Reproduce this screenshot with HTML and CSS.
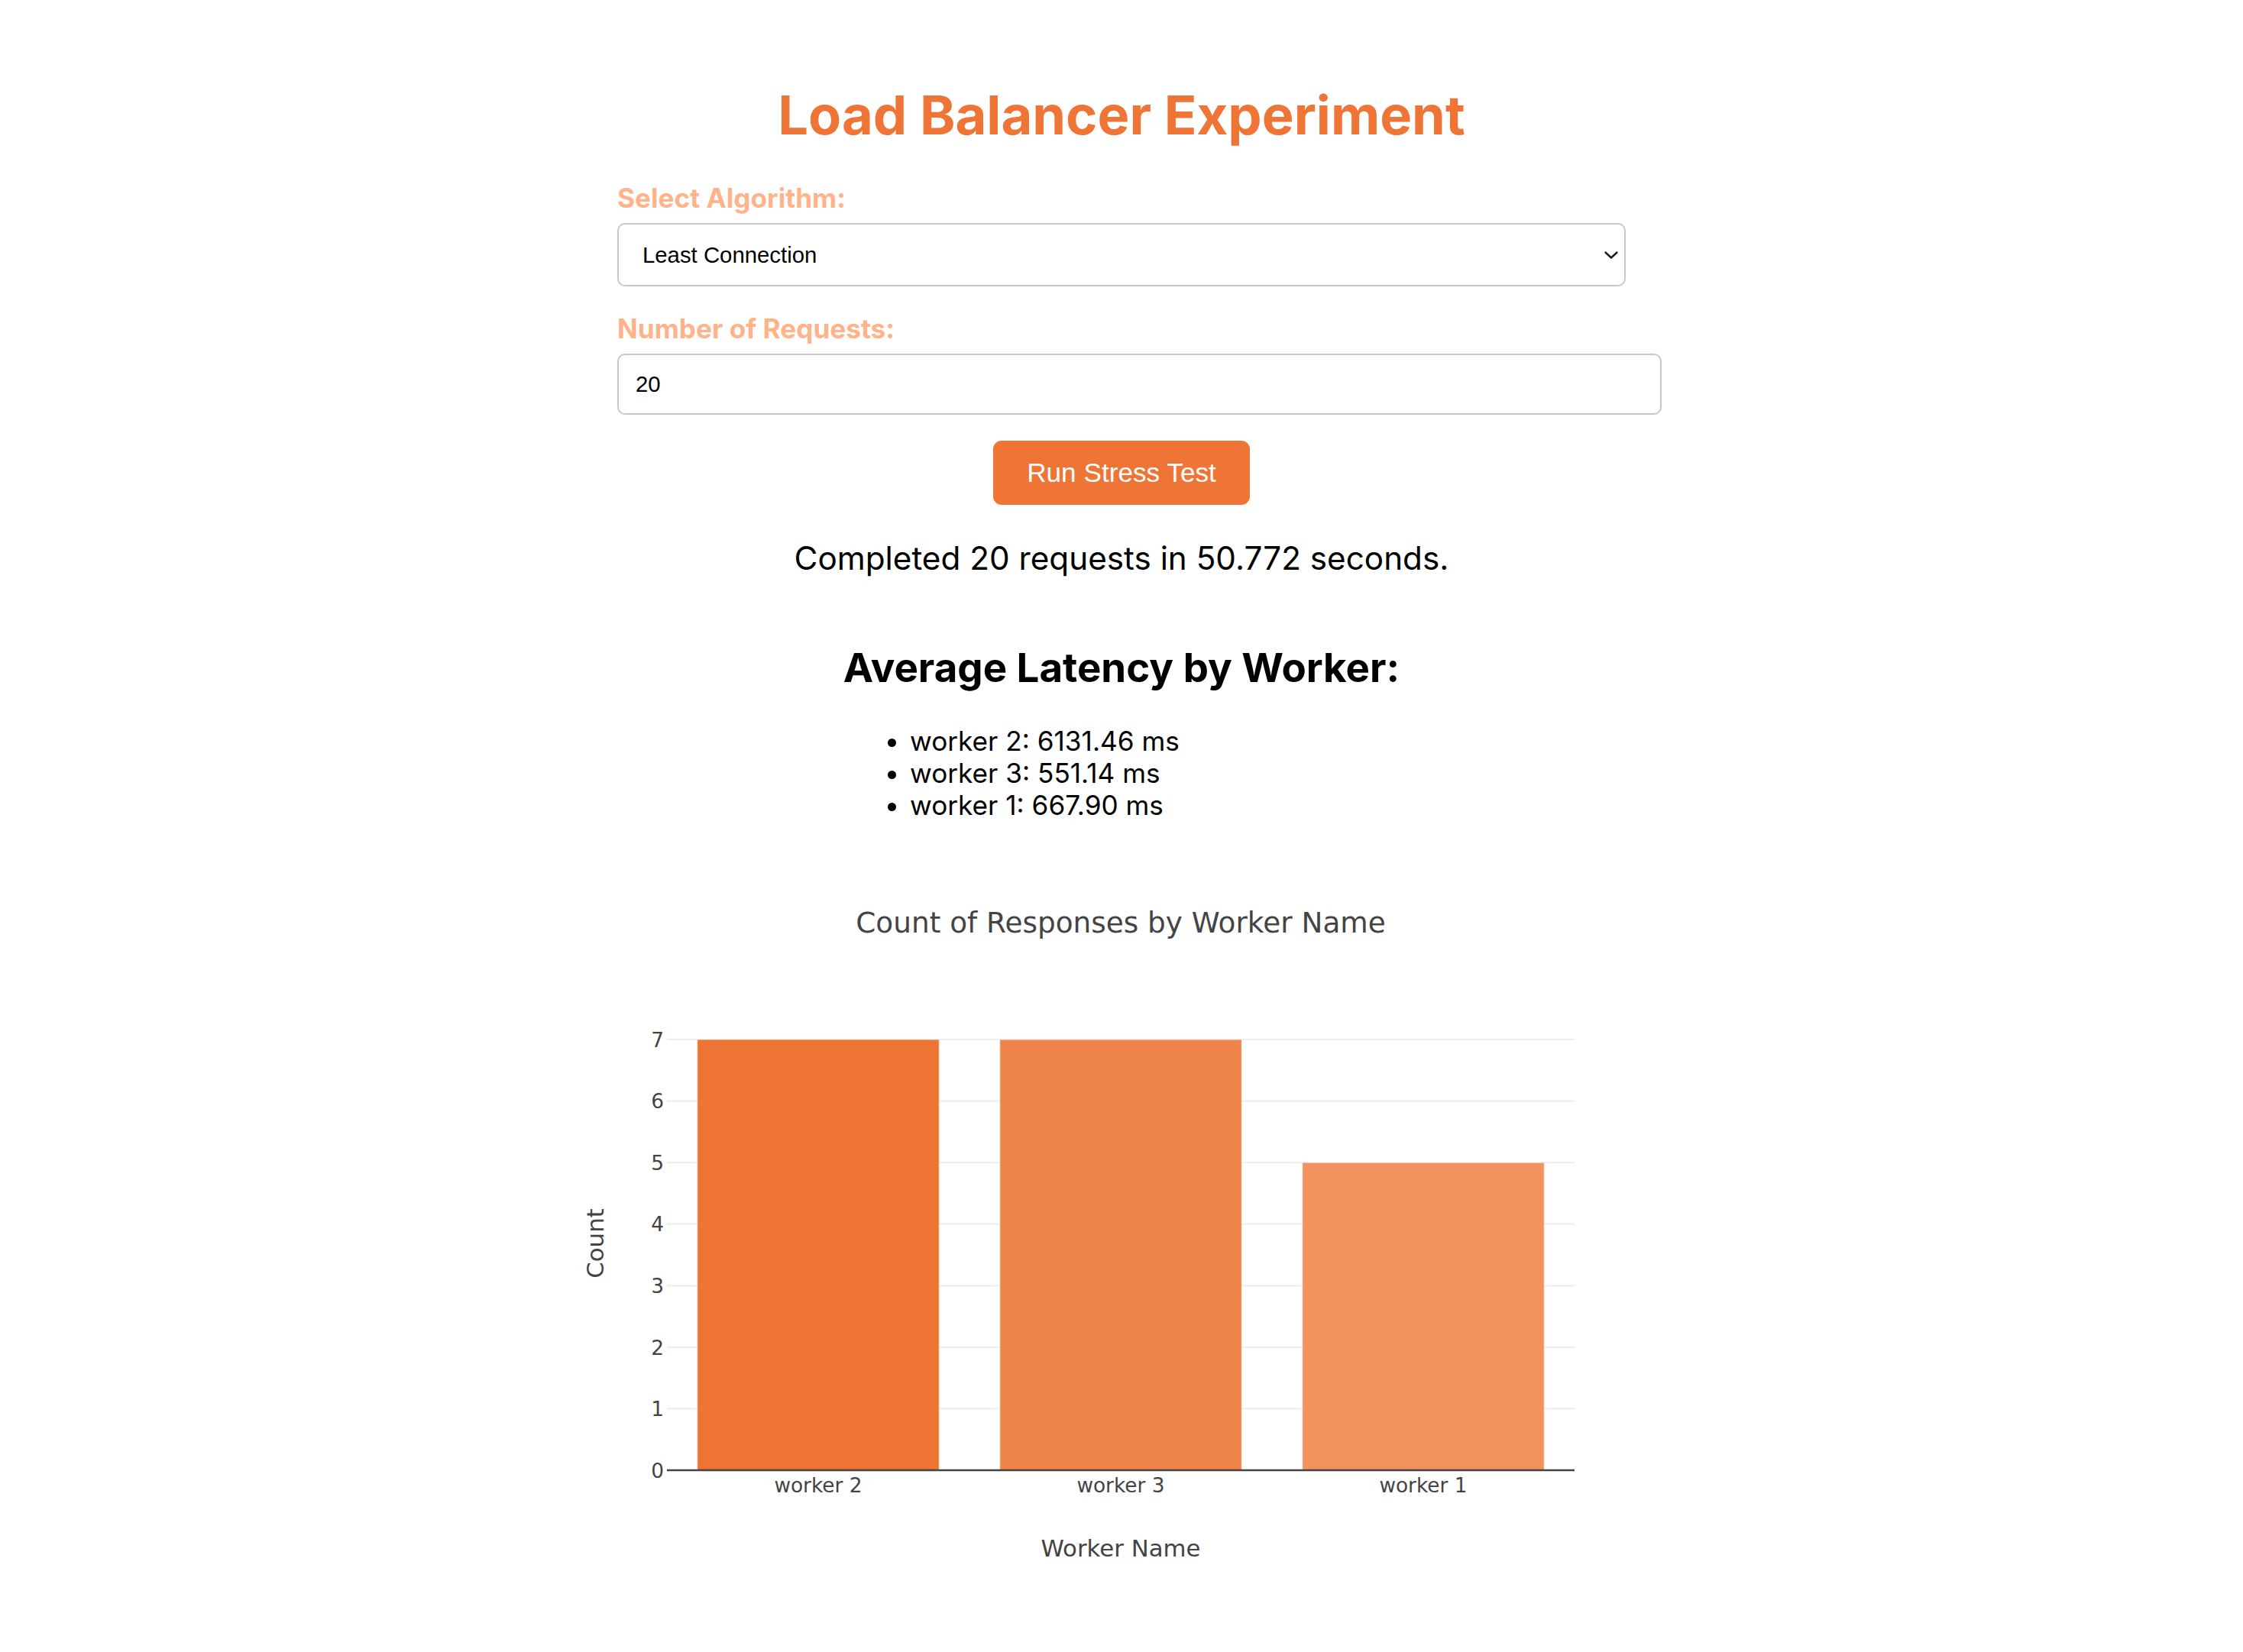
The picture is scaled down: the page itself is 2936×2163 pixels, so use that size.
FILE: index.html
```html
<!DOCTYPE html>
<html lang="en">
<head>
<meta charset="utf-8">
<title>Load Balancer Experiment</title>
<link rel="stylesheet" href="styles.css">
</head>
<body>
<main class="page">
  <h1 class="title">Load Balancer Experiment</h1>

  <label class="field-label" for="algo">Select Algorithm:</label>
  <div class="select" id="algo" role="combobox" aria-expanded="false">
    <span class="select-value">Least Connection</span>
    <svg class="chevron" width="18" height="10" viewBox="0 0 18 10" aria-hidden="true">
      <path d="M1.5 1.5 L9 8.5 L16.5 1.5" fill="none" stroke="#1a1a1a" stroke-width="2.4" stroke-linecap="round" stroke-linejoin="round"/>
    </svg>
  </div>

  <label class="field-label field-label-second" for="reqs">Number of Requests:</label>
  <input class="number-input" id="reqs" type="text" value="20">

  <button class="run-btn" type="button">Run Stress Test</button>

  <p class="result">Completed 20 requests in 50.772 seconds.</p>

  <h2 class="subtitle">Average Latency by Worker:</h2>
  <ul class="latency-list">
    <li>worker 2: 6131.46 ms</li>
    <li>worker 3: 551.14 ms</li>
    <li>worker 1: 667.90 ms</li>
  </ul>
</main>

<svg class="chart" width="1500" height="1000" viewBox="0 0 1500 1000" aria-label="Count of Responses by Worker Name">
  <text class="chart-title" x="749" y="121" text-anchor="middle">Count of Responses by Worker Name</text>

  <g class="grid">
    <line x1="155" x2="1343" y1="744.4" y2="744.4"/>
    <line x1="155" x2="1343" y1="663.9" y2="663.9"/>
    <line x1="155" x2="1343" y1="583.3" y2="583.3"/>
    <line x1="155" x2="1343" y1="502.7" y2="502.7"/>
    <line x1="155" x2="1343" y1="422.2" y2="422.2"/>
    <line x1="155" x2="1343" y1="341.6" y2="341.6"/>
    <line x1="155" x2="1343" y1="261" y2="261"/>
  </g>

  <g class="bars">
    <rect class="bar bar-1" x="194.6" y="261" width="316.8" height="564"/>
    <rect class="bar bar-2" x="590.6" y="261" width="316.8" height="564"/>
    <rect class="bar bar-3" x="986.6" y="422.2" width="316.8" height="402.8"/>
  </g>

  <line class="zeroline" x1="155" x2="1343" y1="825" y2="825"/>

  <g class="ytick" text-anchor="end">
    <text x="151" y="834.6">0</text>
    <text x="151" y="754">1</text>
    <text x="151" y="673.5">2</text>
    <text x="151" y="592.9">3</text>
    <text x="151" y="512.3">4</text>
    <text x="151" y="431.8">5</text>
    <text x="151" y="351.2">6</text>
    <text x="151" y="270.6">7</text>
  </g>

  <g class="xtick" text-anchor="middle">
    <text x="353" y="854">worker 2</text>
    <text x="749" y="854">worker 3</text>
    <text x="1145" y="854">worker 1</text>
  </g>

  <text class="axis-title" x="749" y="938" text-anchor="middle">Worker Name</text>
  <text class="axis-title" x="72" y="528" text-anchor="middle" transform="rotate(-90 72 528)">Count</text>
</svg>
</body>
</html>
```

FILE: styles.css
```css
html, body {
  margin: 0;
  padding: 0;
  background: #ffffff;
}

body {
  font-family: Inter, "Noto Sans", "Liberation Sans", sans-serif;
  color: #000000;
}

.page {
  width: 1320px;
  margin: 0 auto;
  padding-top: 109px;
  display: flex;
  flex-direction: column;
}

.title {
  margin: 0;
  font-size: 70.4px;
  line-height: 84px;
  font-weight: 700;
  color: #ee7535;
  text-align: center;
}

.field-label {
  display: block;
  margin-top: 45px;
  font-size: 35.2px;
  line-height: 42px;
  font-weight: 700;
  color: #ffb38a;
}

.field-label-second {
  margin-top: 34px;
}

.select {
  margin-top: 12px;
  box-sizing: border-box;
  width: 1320px;
  height: 83px;
  border: 2px solid #c8c8c8;
  border-radius: 10px;
  padding: 0 8px 0 31px;
  display: flex;
  align-items: center;
  font-family: "Liberation Sans", Arial, sans-serif;
  font-size: 29.33px;
  color: #000000;
  background: #ffffff;
}

.select-value {
  flex: 1;
}

.chevron {
  flex: none;
  display: block;
}

.number-input {
  margin: 12px 0 0;
  box-sizing: border-box;
  width: 1367px;
  height: 80px;
  border: 2px solid #c8c8c8;
  border-radius: 10px;
  padding: 0 22px;
  font-family: "Liberation Sans", Arial, sans-serif;
  font-size: 29.33px;
  color: #000000;
  background: #ffffff;
  outline: none;
}

.run-btn {
  align-self: center;
  margin-top: 34px;
  width: 336px;
  height: 84px;
  border: none;
  border-radius: 11px;
  background: #ee7535;
  color: #ffffff;
  font-family: "Liberation Sans", Arial, sans-serif;
  font-size: 35.2px;
  padding: 0;
}

.result {
  margin: 44px 0 0;
  font-size: 42.24px;
  line-height: 52px;
  text-align: center;
}

.subtitle {
  margin: 85px 0 0;
  font-size: 52.8px;
  line-height: 64px;
  font-weight: 700;
  text-align: center;
}

.latency-list {
  margin: 43px 0 0;
  padding-left: 383px;
  font-size: 35.2px;
  line-height: 42px;
}

.chart {
  display: block;
  margin: 25px auto 0;
  font-family: "DejaVu Sans", Verdana, sans-serif;
}

.chart-title {
  font-size: 37.4px;
  fill: #444444;
}

.grid line {
  stroke: #eeeeee;
  stroke-width: 2.2;
}

.bar {
  stroke: rgba(255, 255, 255, 0.5);
  stroke-width: 1.5;
}

.bar-1 { fill: #ee7434; }
.bar-2 { fill: #ef844a; }
.bar-3 { fill: #f1925f; }

.zeroline {
  stroke: #444444;
  stroke-width: 2.4;
}

.ytick text,
.xtick text {
  font-size: 26.4px;
  fill: #444444;
}

.axis-title {
  font-size: 30.8px;
  fill: #444444;
}
```
